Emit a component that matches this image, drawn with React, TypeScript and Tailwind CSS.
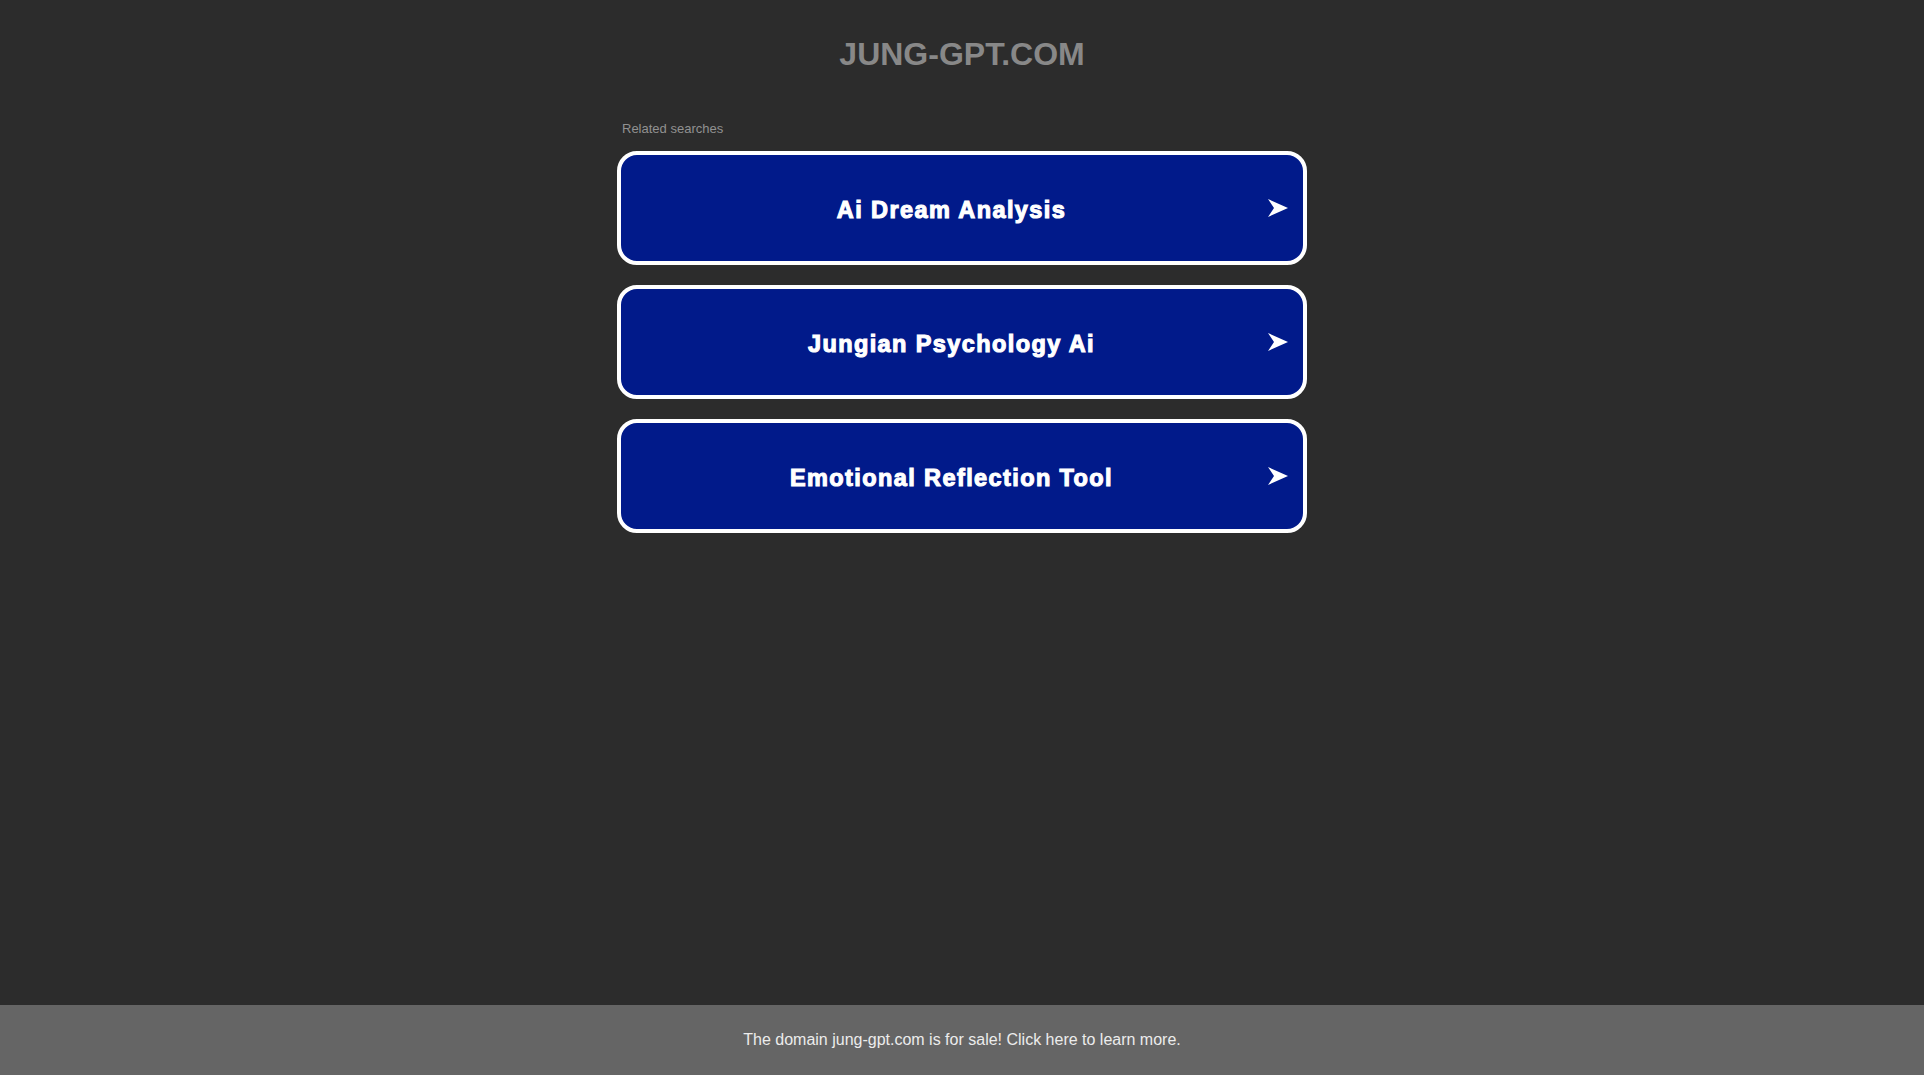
const SEARCHES = ['Ai Dream Analysis', 'Jungian Psychology Ai', 'Emotional Reflection Tool']

function Arrow() {
  return (
    <svg width="20" height="18" viewBox="0 0 20 18" className="absolute right-[15px] top-1/2 -translate-y-1/2">
      <polygon points="0,0 20,9 0,18 6,9" fill="white" />
    </svg>
  )
}

export default function App() {
  return (
    <div className="flex min-h-screen flex-col bg-[#2c2c2c] font-['Liberation_Sans',Arial,sans-serif]">
      <main className="flex flex-1 flex-col items-center">
        <h1 className="mt-[36px] text-[32px] font-bold leading-[37px] text-[#888888]">JUNG-GPT.COM</h1>

        <div className="mt-[48px] w-[690px]">
          <p className="pl-[5px] text-[13px] leading-[15px] text-[#919191]">Related searches</p>

          <div className="mt-[15px] flex flex-col gap-[20px]">
            {SEARCHES.map((label) => (
              <a
                key={label}
                href="#"
                className="relative flex h-[114px] items-center justify-center rounded-[20px] border-4 border-white bg-[#011a8a] pt-[5px] pr-[21px]"
              >
                <span className="text-[23.5px] font-bold tracking-[1.4px] text-white [-webkit-text-stroke:1.1px_white]">
                  {label}
                </span>
                <Arrow />
              </a>
            ))}
          </div>
        </div>
      </main>

      {/* 판매 안내 */}
      <footer className="flex h-[70px] items-center justify-center bg-[#656565]">
        <a href="#" className="text-[16px] text-[#ececec]">
          The domain jung-gpt.com is for sale! Click here to learn more.
        </a>
      </footer>
    </div>
  )
}
